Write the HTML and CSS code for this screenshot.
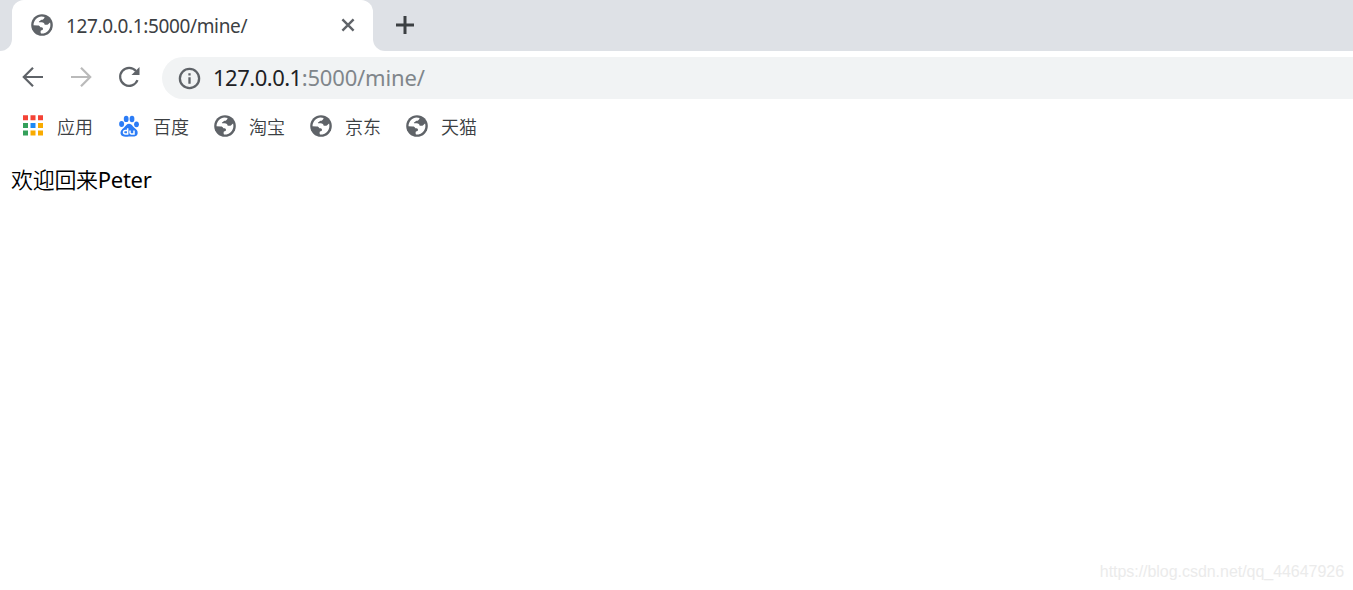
FILE: index.html
```html
<!DOCTYPE html>
<html lang="zh-CN">
<head>
<meta charset="utf-8">
<title>127.0.0.1:5000/mine/</title>
<link rel="stylesheet" href="styles.css">
</head>
<body>
<svg class="defs" aria-hidden="true">
  <symbol id="globe" viewBox="0 0 22 22">
    <circle cx="11" cy="11" r="10.8" fill="#5f6368"/>
    <path fill="#fff" d="M2.5 11.2C2.7 6 6.4 2.6 10.5 2.5L13.6 2.9C13.2 4.8 12.2 5.7 10.6 5.7C9.6 5.7 9.5 6.6 8.9 7.1C8 7.6 7.8 7.8 8 8.2H10.5C12.7 8.2 13.5 9.2 13.7 10.8H16.2C17.3 10.5 17.5 9.2 19.1 8.4C20.5 13.5 17.2 19.6 10 19.6C9.5 18.7 9.5 17.4 9.9 16.5C11.3 16.4 12 15.8 12 14.8C11.9 13.6 11 13.3 9.4 13.3C8.8 12 8.2 11.4 6.8 11.4Z"/>
  </symbol>
</svg>
<header class="tabs">
  <div class="lead"></div>
  <div class="tab">
    <svg class="globe"><use href="#globe"/></svg>
    <span class="tab-title">127.0.0.1:5000/mine/</span>
    <svg class="close" viewBox="0 0 14 14"><path d="M1.4 1.4 12.6 12.6M12.6 1.4 1.4 12.6"/></svg>
  </div>
  <div class="rest"><svg class="plus" viewBox="0 0 18 18"><path d="M9 0V18M0 9H18"/></svg></div>
</header>
<nav class="toolbar">
  <svg class="nav" viewBox="0 0 22 22"><path d="M21 11H2M11 1.8 1.8 11 11 20.2"/></svg>
  <svg class="nav off" viewBox="0 0 22 22"><path d="M1 11H20M11 1.8 20.2 11 11 20.2"/></svg>
  <svg class="nav" viewBox="0 0 22 22"><path d="M19.5 14.2A9 9 0 1 1 18 5"/><path class="solid" d="M21.5 1V9H13.5Z"/></svg>
  <div class="address">
    <svg class="info" viewBox="0 0 22 22"><circle cx="11" cy="11" r="9.2"/><path d="M11 9.8V16M11 6V8.2"/></svg>
    <span class="url"><b>127.0.0.1</b>:5000/mine/</span>
  </div>
</nav>
<nav class="bookmarks">
  <a class="bookmark"><svg class="icon" viewBox="0 0 22 22">
    <path fill="#f44336" d="M1 .3h5v5H1zM8.5 .3h5v5h-5zM16 .3h5v5h-5z"/>
    <path fill="#34a05a" d="M1 8h5v5H1zM1 15.5h5v5H1z"/>
    <path fill="#1e88f5" d="M8.5 8h5v5h-5z"/>
    <path fill="#f9ab00" d="M16 8h5v5h-5zM8.5 15.5h5v5h-5zM16 15.5h5v5h-5z"/>
  </svg><span>应用</span></a>
  <a class="bookmark"><svg class="icon" viewBox="0 0 22 22">
    <g fill="#2b7cf6"><ellipse cx="3.6" cy="9" rx="2.5" ry="3"/><ellipse cx="8.2" cy="3.9" rx="2.4" ry="3.2"/><ellipse cx="14" cy="4" rx="2.4" ry="3.2"/><ellipse cx="18.5" cy="9.3" rx="2.4" ry="2.9"/>
    <path d="M11.2 8.8C13.6 8.8 14.4 11.1 16.3 12.8C18.4 14.6 20.2 16 19.6 18.7C18.9 22 15.2 21.8 11 21.4C7.2 22 3.4 22 2.6 18.7C2 16 3.8 14.5 5.9 12.7C7.9 11 8.7 8.8 11.2 8.8Z"/></g>
    <path class="du" d="M9.7 13.2V19H7.3Q5.5 19 5.5 17.3T7.3 15.6H9.7M12 15.5V17.6Q12 19 13.2 19H16V15.5"/>
  </svg><span>百度</span></a>
  <a class="bookmark"><svg class="globe"><use href="#globe"/></svg><span>淘宝</span></a>
  <a class="bookmark"><svg class="globe"><use href="#globe"/></svg><span>京东</span></a>
  <a class="bookmark"><svg class="globe"><use href="#globe"/></svg><span>天猫</span></a>
</nav>
<main class="page">
  <p class="welcome">欢迎回来<span>Peter</span></p>
  <div class="watermark">https://blog.csdn.net/qq_44647926</div>
</main>
</body>
</html>
```
FILE: styles.css
```css
* { box-sizing: border-box; }
body {
  margin: 0;
  height: 590px;
  overflow: hidden;
  display: flex;
  flex-direction: column;
  background: #fff;
  font-family: "Noto Sans", "Noto Sans CJK SC", sans-serif;
}
svg { display: block; flex: none; fill: none; }
.defs { display: none; }
.globe, .icon { width: 22px; height: 22px; }

.tabs { display: flex; height: 51px; background: #fff; }
.lead { width: 12px; background: #dee1e6; border-bottom-right-radius: 12px; }
.tab {
  width: 361px;
  padding: 0 18px 1px 19px;
  display: flex;
  align-items: center;
  background: linear-gradient(#dee1e6, #dee1e6) top / 100% 12px no-repeat;
  position: relative;
  z-index: 0;
}
.tab::before {
  content: "";
  position: absolute;
  inset: 0;
  z-index: -1;
  background: #fff;
  border-radius: 12px 12px 0 0;
}
.tab-title {
  flex: 1;
  margin-left: 13px;
  padding-top: 1px;
  font-size: 19px;
  letter-spacing: -.36px;
  line-height: 26px;
  color: #3c4043;
  white-space: nowrap;
}
.close { width: 14px; height: 14px; stroke: #5f6368; stroke-width: 2.4; }
.rest {
  flex: 1;
  display: flex;
  align-items: center;
  padding: 0 0 1px 23px;
  background: #dee1e6;
  border-bottom-left-radius: 12px;
}
.plus { width: 18px; height: 18px; stroke: #3c4043; stroke-width: 3; }

.toolbar { display: flex; align-items: center; height: 54px; padding-left: 22px; }
.nav { width: 22px; height: 22px; margin: 0 26px 2px 0; stroke: #5f6368; stroke-width: 2.2; }
.off { stroke: #bababa; }
.nav .solid { fill: #5f6368; stroke: none; }
.address {
  flex: 1;
  height: 42px;
  margin-left: -4px;
  padding-left: 16px;
  display: flex;
  align-items: center;
  border-radius: 21px 0 0 21px;
  background: #f1f3f4;
}
.info { width: 23px; height: 23px; stroke: #5f6368; stroke-width: 2.2; }
.url { margin-left: 12px; padding-bottom: 2px; font-size: 22px; letter-spacing: -.17px; line-height: 30px; color: #80868b; }
.url b { font-weight: 400; color: #202124; letter-spacing: -.5px; }

.bookmarks { display: flex; height: 42px; padding-left: 22px; align-items: center; }
.bookmark { width: 96px; display: flex; align-items: center; gap: 13px; }
.bookmark span {
  font-family: "Noto Sans CJK SC", sans-serif;
  font-size: 18px;
  font-weight: 350;
  line-height: 24px;
  color: #3c4043;
}
.du { stroke: #fff; stroke-width: 1.5; }

.page {
  flex: 1;
  padding: 16px 9px 7px 11px;
  display: flex;
  flex-direction: column;
  justify-content: space-between;
}
.welcome {
  margin: 0;
  font-size: 22px;
  font-weight: 350;
  line-height: 32px;
  letter-spacing: -.3px;
  color: #000;
}
.welcome span { font-weight: 400; }
.watermark {
  align-self: flex-end;
  font-family: "Liberation Sans", sans-serif;
  font-size: 16px;
  letter-spacing: -.04px;
  line-height: 22px;
  color: #ebebeb;
}
```
